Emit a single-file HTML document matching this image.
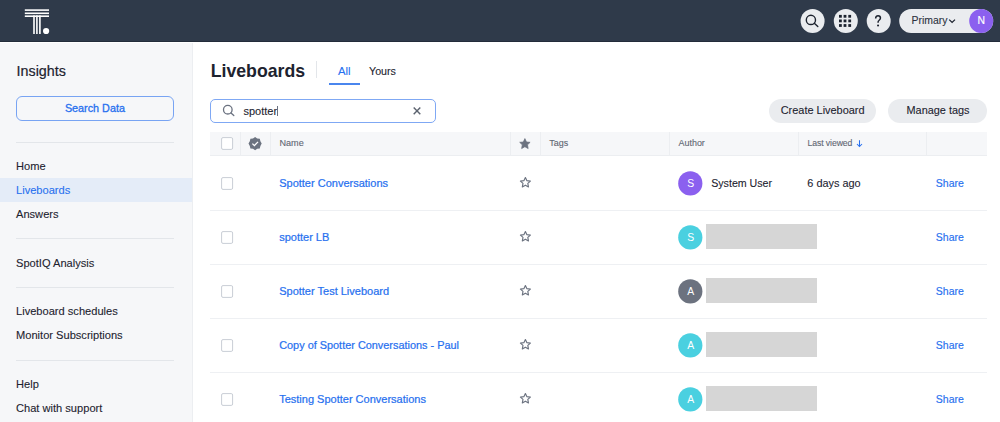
<!DOCTYPE html>
<html><head><meta charset="utf-8">
<style>
*{margin:0;padding:0;box-sizing:border-box}
html,body{width:1000px;height:422px;overflow:hidden;background:#fff;font-family:"Liberation Sans",sans-serif;color:#1d232f}
.t{position:absolute;white-space:nowrap;-webkit-text-stroke:0.1px currentColor}
.r{position:absolute}
svg{position:absolute;overflow:visible}
</style></head><body>
<div class="r" style="left:0px;top:0px;width:1000px;height:41px;background:#2f3a4a;"></div>
<div class="r" style="left:0px;top:41px;width:1000px;height:1px;background:#232c3a;"></div>
<svg style="left:0;top:0" width="60" height="41" viewBox="0 0 60 41">
<g fill="#fff">
<rect x="24.8" y="9.3" width="24.2" height="1.6"/>
<rect x="24.8" y="12.5" width="24.2" height="1.6"/>
<rect x="24.8" y="15.4" width="24.2" height="1.6"/>
<rect x="33.2" y="15.4" width="1.6" height="18.6"/>
<rect x="36.1" y="15.4" width="1.6" height="18.6"/>
<rect x="39.1" y="15.4" width="1.6" height="18.6"/>
<circle cx="46.1" cy="31" r="3.1"/>
</g></svg>
<svg style="left:0;top:0" width="1000" height="41" viewBox="0 0 1000 41">
<circle cx="812.6" cy="20.9" r="12" fill="#eaecef"/>
<circle cx="845.8" cy="20.9" r="12" fill="#eaecef"/>
<circle cx="878.7" cy="20.9" r="12" fill="#eaecef"/>
<rect x="899.2" y="8.9" width="94" height="24" rx="12" fill="#eaecef"/>
<circle cx="981.2" cy="20.9" r="12" fill="#8b60ef"/>
<circle cx="810.9" cy="19.9" r="4.6" fill="none" stroke="#1d232f" stroke-width="1.4"/>
<line x1="814.3" y1="23.3" x2="817.8" y2="26.6" stroke="#1d232f" stroke-width="1.4" stroke-linecap="round"/>
<g fill="#1d232f">
<rect x="839" y="14.9" width="2.8" height="2.8"/><rect x="843.6" y="14.9" width="2.8" height="2.8"/><rect x="848.3" y="14.9" width="2.8" height="2.8"/>
<rect x="839" y="19.5" width="2.8" height="2.8"/><rect x="843.6" y="19.5" width="2.8" height="2.8"/><rect x="848.3" y="19.5" width="2.8" height="2.8"/>
<rect x="839" y="24.1" width="2.8" height="2.8"/><rect x="843.6" y="24.1" width="2.8" height="2.8"/><rect x="848.3" y="24.1" width="2.8" height="2.8"/>
</g>
<path d="M949.2 19.6 L952.1 22.4 L955 19.6" fill="none" stroke="#1d232f" stroke-width="1.3"/>
</svg>
<svg style="left:0;top:0" width="1000" height="41" viewBox="0 0 1000 41"><path d="M875.65 18.6 C875.65 16.8 876.7 15.75 878.05 15.75 C879.4 15.75 880.45 16.7 880.45 18.1 C880.45 19.3 879.7 19.9 878.9 20.5 C878.2 21 878.05 21.6 878.05 22.7" fill="none" stroke="#1d232f" stroke-width="1.5"/><circle cx="878.05" cy="25.5" r="1.05" fill="#1d232f"/></svg>
<div class="t" style="left:911.5px;top:15.75px;font-size:10.45px;line-height:10.45px;color:#2b3240;font-weight:400;">Primary</div>
<div class="t" style="left:977.5px;top:15.70px;font-size:10.4px;line-height:10.4px;color:#fff;font-weight:400;-webkit-text-stroke:0.15px currentColor">N</div>
<div class="r" style="left:0px;top:42px;width:192px;height:1px;background:#ffffff;"></div>
<div class="r" style="left:0px;top:43px;width:192px;height:379px;background:#f6f7f9;"></div>
<div class="r" style="left:192px;top:43px;width:1px;height:379px;background:#eceef1;"></div>
<div class="t" style="left:16.6px;top:63.90px;font-size:14.3px;line-height:14.3px;color:#1d232f;font-weight:400;-webkit-text-stroke:0.2px currentColor">Insights</div>
<div class="r" style="left:16px;top:96px;width:158px;height:25px;border:1px solid #78a4f3;border-radius:6px"></div>
<div class="t" style="left:64.9px;top:103.16px;font-size:10.8px;line-height:10.8px;color:#2770ef;font-weight:400;-webkit-text-stroke:0.3px currentColor">Search Data</div>
<div class="r" style="left:16px;top:142px;width:158px;height:1px;background:#e3e6ea;"></div>
<div class="r" style="left:16px;top:238px;width:158px;height:1px;background:#e3e6ea;"></div>
<div class="r" style="left:16px;top:287px;width:158px;height:1px;background:#e3e6ea;"></div>
<div class="r" style="left:16px;top:360px;width:158px;height:1px;background:#e3e6ea;"></div>
<div class="r" style="left:0px;top:178px;width:192px;height:24px;background:#e4ecf8;"></div>
<div class="t" style="left:16px;top:161.10px;font-size:11.1px;line-height:11.1px;color:#1d232f;font-weight:400;">Home</div>
<div class="t" style="left:16px;top:185.00px;font-size:11.1px;line-height:11.1px;color:#2770ef;font-weight:400;">Liveboards</div>
<div class="t" style="left:16px;top:209.20px;font-size:11.1px;line-height:11.1px;color:#1d232f;font-weight:400;">Answers</div>
<div class="t" style="left:16px;top:258.40px;font-size:11.1px;line-height:11.1px;color:#1d232f;font-weight:400;">SpotIQ Analysis</div>
<div class="t" style="left:16px;top:305.90px;font-size:11.1px;line-height:11.1px;color:#1d232f;font-weight:400;">Liveboard schedules</div>
<div class="t" style="left:16px;top:329.90px;font-size:11.1px;line-height:11.1px;color:#1d232f;font-weight:400;">Monitor Subscriptions</div>
<div class="t" style="left:16px;top:379.40px;font-size:11.1px;line-height:11.1px;color:#1d232f;font-weight:400;">Help</div>
<div class="t" style="left:16px;top:403.30px;font-size:11.1px;line-height:11.1px;color:#1d232f;font-weight:400;">Chat with support</div>
<div class="t" style="left:210.7px;top:63.02px;font-size:17.7px;line-height:17.7px;color:#1d232f;font-weight:700;-webkit-text-stroke:0">Liveboards</div>
<div class="r" style="left:316px;top:61px;width:1px;height:17px;background:#e3e6ea;"></div>
<div class="t" style="left:337.9px;top:65.83px;font-size:11.3px;line-height:11.3px;color:#2770ef;font-weight:400;">All</div>
<div class="t" style="left:369.0px;top:66.34px;font-size:10.7px;line-height:10.7px;color:#1d232f;font-weight:400;">Yours</div>
<div class="r" style="left:329px;top:83px;width:31px;height:2px;background:#4a86ee;"></div>
<div class="r" style="left:210px;top:99px;width:226px;height:24px;border:1px solid #7fa8f4;border-radius:5px"></div>
<svg style="left:0;top:0" width="1000" height="422" viewBox="0 0 1000 422">
<circle cx="227.8" cy="109.7" r="4.3" fill="none" stroke="#6b7280" stroke-width="1.3"/>
<line x1="231" y1="113" x2="233.8" y2="115.6" stroke="#6b7280" stroke-width="1.3" stroke-linecap="round"/>
<path d="M413.7 107.6 L420.3 114.2 M420.3 107.6 L413.7 114.2" stroke="#5d6470" stroke-width="1.45"/>
</svg>
<div class="t" style="left:243.5px;top:105.59px;font-size:11.0px;line-height:11.0px;color:#1d232f;font-weight:400;">spotter</div>
<div class="r" style="left:277px;top:106px;width:1px;height:10px;background:#6b7280;"></div>
<div class="r" style="left:769px;top:99px;width:107px;height:24px;border-radius:12px;background:#eaecef"></div>
<div class="r" style="left:888px;top:99px;width:99px;height:24px;border-radius:12px;background:#eaecef"></div>
<div class="t" style="left:780.7px;top:104.73px;font-size:10.95px;line-height:10.95px;color:#1d232f;font-weight:400;">Create Liveboard</div>
<div class="t" style="left:906.5px;top:104.77px;font-size:10.9px;line-height:10.9px;color:#1d232f;font-weight:400;">Manage tags</div>
<div class="r" style="left:210px;top:132px;width:777px;height:23px;background:#f6f7f9;"></div>
<div class="r" style="left:210px;top:155px;width:777px;height:1px;background:#eceef1;"></div>
<div class="r" style="left:240px;top:132px;width:1px;height:23px;background:#eceef1;"></div>
<div class="r" style="left:270px;top:132px;width:1px;height:23px;background:#eceef1;"></div>
<div class="r" style="left:510px;top:132px;width:1px;height:23px;background:#eceef1;"></div>
<div class="r" style="left:540px;top:132px;width:1px;height:23px;background:#eceef1;"></div>
<div class="r" style="left:669px;top:132px;width:1px;height:23px;background:#eceef1;"></div>
<div class="r" style="left:798px;top:132px;width:1px;height:23px;background:#eceef1;"></div>
<div class="r" style="left:926px;top:132px;width:1px;height:23px;background:#eceef1;"></div>
<svg style="left:0;top:0" width="1000" height="422"><rect x="221.6" y="137.6" width="11.0" height="11.8" rx="1.4" fill="#fff" stroke="#c9ced6" stroke-width="1"/></svg>
<div class="t" style="left:279.5px;top:139.20px;font-size:9.1px;line-height:9.1px;color:#5f6672;font-weight:400;">Name</div>
<div class="t" style="left:549.3px;top:139.28px;font-size:9.0px;line-height:9.0px;color:#5f6672;font-weight:400;">Tags</div>
<div class="t" style="left:678.5px;top:139.02px;font-size:8.95px;line-height:8.95px;color:#5f6672;font-weight:400;">Author</div>
<div class="t" style="left:807.5px;top:139.24px;font-size:8.7px;line-height:8.7px;color:#5f6672;font-weight:400;letter-spacing:-0.1px">Last viewed</div>
<svg style="left:0;top:0" width="1000" height="422" viewBox="0 0 1000 422">
<path d="M255.1 137 L257.2 138.5 L259.8 138.8 L260.4 141.3 L261.7 143.6 L260.4 145.9 L259.8 148.4 L257.2 148.7 L255.1 150.2 L253 148.7 L250.4 148.4 L249.8 145.9 L248.5 143.6 L249.8 141.3 L250.4 138.8 L253 138.5 Z" fill="#6c7380"/>
<path d="M252.4 143.6 L254.4 145.6 L258 141.9" fill="none" stroke="#fff" stroke-width="1.3"/>
<path transform="translate(524.9 143.9) scale(0.93)" d="M0 -5.7 L1.7 -2 L5.6 -1.7 L2.8 1 L3.5 5 L0 3 L-3.5 5 L-2.8 1 L-5.6 -1.7 L-1.7 -2 Z" fill="#6c7380" stroke="#6c7380" stroke-width="0.8" stroke-linejoin="round"/>
<path d="M859.5 140.2 L859.5 146.4 M857 144 L859.5 146.5 L862 144" fill="none" stroke="#2770ef" stroke-width="1.05"/>
</svg>
<svg style="left:0;top:0" width="1000" height="422"><rect x="221.6" y="177.6" width="11.0" height="11.8" rx="1.4" fill="#fff" stroke="#c9ced6" stroke-width="1"/></svg>
<div class="t" style="left:279.2px;top:177.89px;font-size:11.0px;line-height:11.0px;color:#2770ef;font-weight:400;-webkit-text-stroke:0.22px currentColor">Spotter Conversations</div>
<svg style="left:0;top:0" width="1000" height="422"><circle cx="690.3" cy="183.4" r="12.1" fill="#8b60ef"/></svg>
<div class="t" style="left:687.3px;top:178.60px;font-size:10.4px;line-height:10.4px;color:#fff;font-weight:400;-webkit-text-stroke:0">S</div>
<div class="t" style="left:711.2px;top:178.18px;font-size:10.65px;line-height:10.65px;color:#1d232f;font-weight:400;">System User</div>
<div class="t" style="left:807.3px;top:177.97px;font-size:10.9px;line-height:10.9px;color:#1d232f;font-weight:400;">6 days ago</div>
<div class="t" style="left:935.8px;top:178.31px;font-size:10.5px;line-height:10.5px;color:#2770ef;font-weight:400;-webkit-text-stroke:0.15px currentColor">Share</div>
<div class="r" style="left:210px;top:210px;width:777px;height:1px;background:#eef0f3;"></div>
<svg style="left:0;top:0" width="1000" height="422"><rect x="221.6" y="231.6" width="11.0" height="11.8" rx="1.4" fill="#fff" stroke="#c9ced6" stroke-width="1"/></svg>
<div class="t" style="left:279.2px;top:231.89px;font-size:11.0px;line-height:11.0px;color:#2770ef;font-weight:400;-webkit-text-stroke:0.22px currentColor">spotter LB</div>
<svg style="left:0;top:0" width="1000" height="422"><circle cx="690.3" cy="237.4" r="12.1" fill="#4ad0e0"/></svg>
<div class="t" style="left:687.3px;top:232.60px;font-size:10.4px;line-height:10.4px;color:#fff;font-weight:400;-webkit-text-stroke:0">S</div>
<div class="r" style="left:706px;top:224px;width:111px;height:25px;background:#d6d6d6;"></div>
<div class="t" style="left:935.8px;top:232.31px;font-size:10.5px;line-height:10.5px;color:#2770ef;font-weight:400;-webkit-text-stroke:0.15px currentColor">Share</div>
<div class="r" style="left:210px;top:264px;width:777px;height:1px;background:#eef0f3;"></div>
<svg style="left:0;top:0" width="1000" height="422"><rect x="221.6" y="285.6" width="11.0" height="11.8" rx="1.4" fill="#fff" stroke="#c9ced6" stroke-width="1"/></svg>
<div class="t" style="left:279.2px;top:285.89px;font-size:11.0px;line-height:11.0px;color:#2770ef;font-weight:400;-webkit-text-stroke:0.22px currentColor">Spotter Test Liveboard</div>
<svg style="left:0;top:0" width="1000" height="422"><circle cx="690.3" cy="291.4" r="12.1" fill="#6c727f"/></svg>
<div class="t" style="left:687.3px;top:286.60px;font-size:10.4px;line-height:10.4px;color:#fff;font-weight:400;-webkit-text-stroke:0">A</div>
<div class="r" style="left:706px;top:278px;width:111px;height:25px;background:#d6d6d6;"></div>
<div class="t" style="left:935.8px;top:286.31px;font-size:10.5px;line-height:10.5px;color:#2770ef;font-weight:400;-webkit-text-stroke:0.15px currentColor">Share</div>
<div class="r" style="left:210px;top:318px;width:777px;height:1px;background:#eef0f3;"></div>
<svg style="left:0;top:0" width="1000" height="422"><rect x="221.6" y="339.6" width="11.0" height="11.8" rx="1.4" fill="#fff" stroke="#c9ced6" stroke-width="1"/></svg>
<div class="t" style="left:279.2px;top:339.97px;font-size:10.9px;line-height:10.9px;color:#2770ef;font-weight:400;-webkit-text-stroke:0.22px currentColor">Copy of Spotter Conversations - Paul</div>
<svg style="left:0;top:0" width="1000" height="422"><circle cx="690.3" cy="345.4" r="12.1" fill="#4ad0e0"/></svg>
<div class="t" style="left:687.3px;top:340.60px;font-size:10.4px;line-height:10.4px;color:#fff;font-weight:400;-webkit-text-stroke:0">A</div>
<div class="r" style="left:706px;top:332px;width:111px;height:25px;background:#d6d6d6;"></div>
<div class="t" style="left:935.8px;top:340.31px;font-size:10.5px;line-height:10.5px;color:#2770ef;font-weight:400;-webkit-text-stroke:0.15px currentColor">Share</div>
<div class="r" style="left:210px;top:372px;width:777px;height:1px;background:#eef0f3;"></div>
<svg style="left:0;top:0" width="1000" height="422"><rect x="221.6" y="393.6" width="11.0" height="11.8" rx="1.4" fill="#fff" stroke="#c9ced6" stroke-width="1"/></svg>
<div class="t" style="left:279.2px;top:393.89px;font-size:11.0px;line-height:11.0px;color:#2770ef;font-weight:400;-webkit-text-stroke:0.22px currentColor">Testing Spotter Conversations</div>
<svg style="left:0;top:0" width="1000" height="422"><circle cx="690.3" cy="399.4" r="12.1" fill="#4ad0e0"/></svg>
<div class="t" style="left:687.3px;top:394.60px;font-size:10.4px;line-height:10.4px;color:#fff;font-weight:400;-webkit-text-stroke:0">A</div>
<div class="r" style="left:706px;top:386px;width:111px;height:25px;background:#d6d6d6;"></div>
<div class="t" style="left:935.8px;top:394.31px;font-size:10.5px;line-height:10.5px;color:#2770ef;font-weight:400;-webkit-text-stroke:0.15px currentColor">Share</div>
<svg style="left:0;top:0" width="1000" height="422" viewBox="0 0 1000 422"><path transform="translate(525.4 182.5) scale(0.96)" d="M0 -5.2 L1.6 -1.9 L5.2 -1.5 L2.5 0.9 L3.2 4.6 L0 2.8 L-3.2 4.6 L-2.5 0.9 L-5.2 -1.5 L-1.6 -1.9 Z" fill="none" stroke="#6c7380" stroke-width="1.2" stroke-linejoin="round"/><path transform="translate(525.4 236.5) scale(0.96)" d="M0 -5.2 L1.6 -1.9 L5.2 -1.5 L2.5 0.9 L3.2 4.6 L0 2.8 L-3.2 4.6 L-2.5 0.9 L-5.2 -1.5 L-1.6 -1.9 Z" fill="none" stroke="#6c7380" stroke-width="1.2" stroke-linejoin="round"/><path transform="translate(525.4 290.5) scale(0.96)" d="M0 -5.2 L1.6 -1.9 L5.2 -1.5 L2.5 0.9 L3.2 4.6 L0 2.8 L-3.2 4.6 L-2.5 0.9 L-5.2 -1.5 L-1.6 -1.9 Z" fill="none" stroke="#6c7380" stroke-width="1.2" stroke-linejoin="round"/><path transform="translate(525.4 344.5) scale(0.96)" d="M0 -5.2 L1.6 -1.9 L5.2 -1.5 L2.5 0.9 L3.2 4.6 L0 2.8 L-3.2 4.6 L-2.5 0.9 L-5.2 -1.5 L-1.6 -1.9 Z" fill="none" stroke="#6c7380" stroke-width="1.2" stroke-linejoin="round"/><path transform="translate(525.4 398.5) scale(0.96)" d="M0 -5.2 L1.6 -1.9 L5.2 -1.5 L2.5 0.9 L3.2 4.6 L0 2.8 L-3.2 4.6 L-2.5 0.9 L-5.2 -1.5 L-1.6 -1.9 Z" fill="none" stroke="#6c7380" stroke-width="1.2" stroke-linejoin="round"/></svg>
</body></html>
